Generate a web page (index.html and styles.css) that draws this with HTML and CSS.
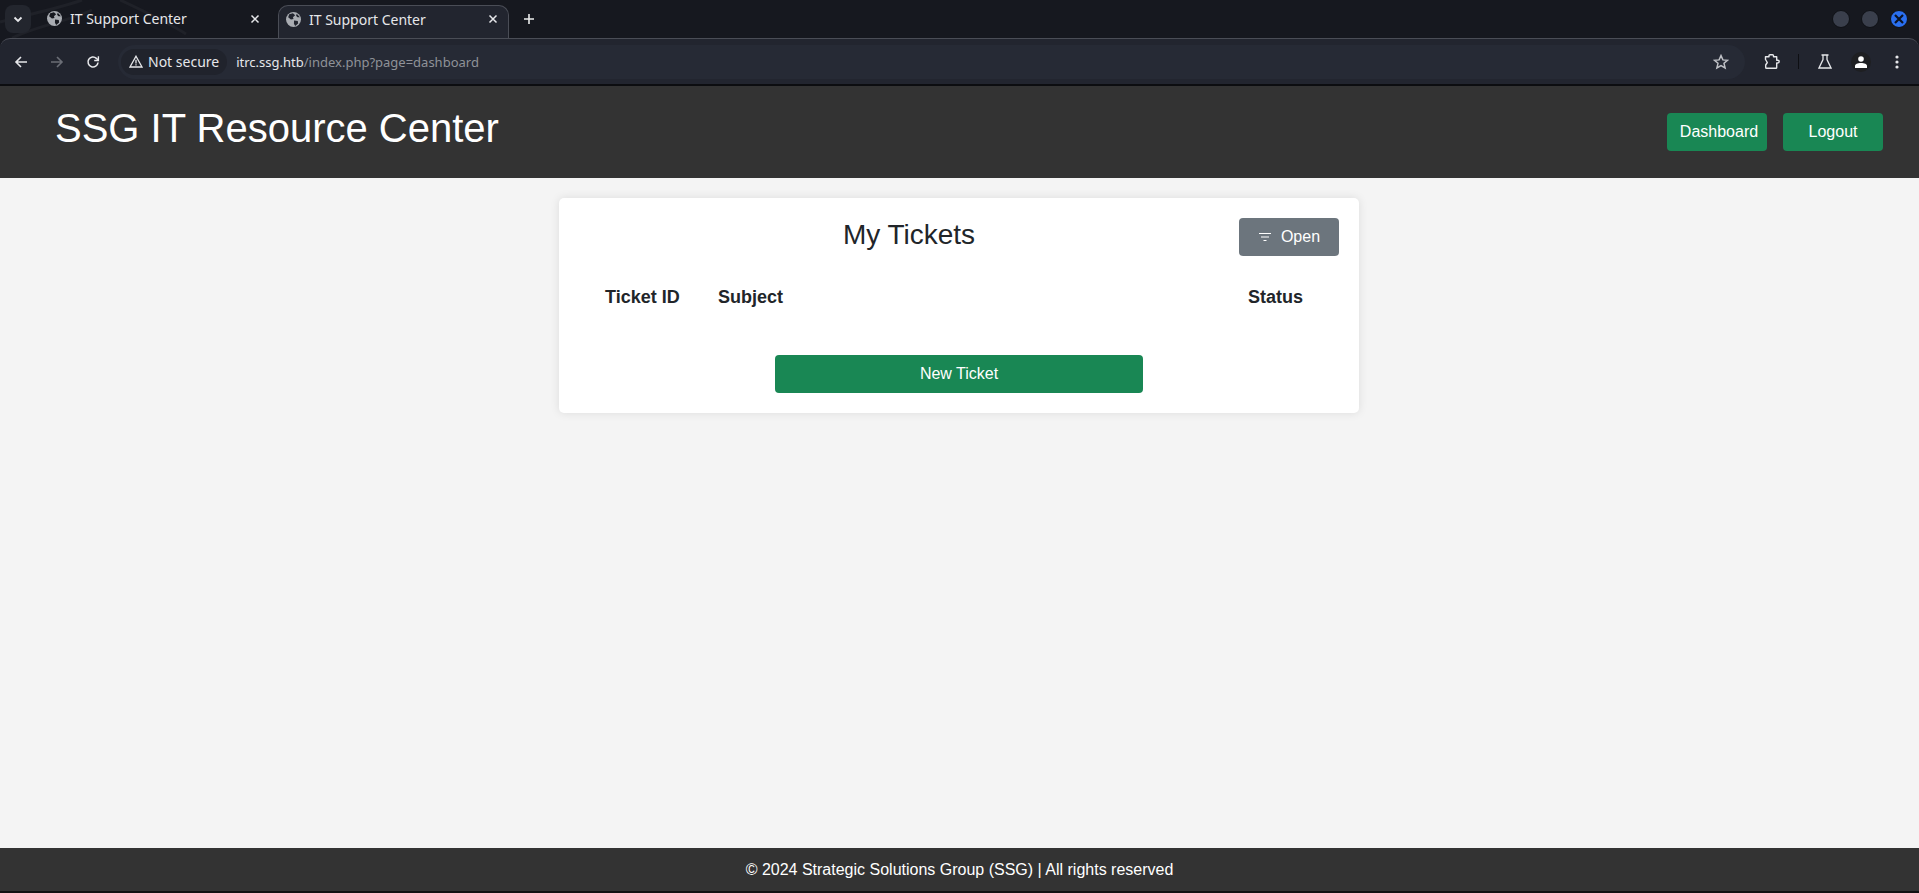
FILE: index.html
```html
<!DOCTYPE html>
<html lang="en">
<head>
  <meta charset="UTF-8">
  <title>IT Support Center</title>
  <link rel="stylesheet" href="styles.css">
</head>
<body>
  <div class="browser">
    <div class="tabstrip">
      <svg class="wallpaper" width="300" height="38" viewBox="0 0 300 38" fill="none" stroke="#1f2128" stroke-width="3">
        <path d="M0 22 C30 14 60 8 82 0"/>
        <path d="M12 38 C36 26 66 22 92 10"/>
        <path d="M120 0 C150 14 170 24 186 34"/>
      </svg>
      <button class="tab-search">
        <svg width="12" height="12" viewBox="0 0 12 12" fill="none" stroke="#e6e7ea" stroke-width="1.8"><path d="M2.5 4.5 6 8l3.5-3.5"/></svg>
      </button>
      <div class="tab">
        <svg class="globe" width="15" height="15" viewBox="0 0 14 14"><circle cx="7" cy="7" r="7" fill="#a9acb2"/><path d="M3 2 6.500 1.200 8.500 3 6.500 5 7 6.500 4.600 7 2 5zM7.500 8l3.500.5.3 2.300L8.600 13 7.400 11zM10 1.600l3 3.200-2.300.2-1.300-1.400z" fill="#171920"/></svg>
        <span class="tab-title">IT Support Center</span>
        <svg class="tab-close" width="10" height="10" viewBox="0 0 10 10" stroke="#e6e7ea" stroke-width="1.5"><path d="M1.500 1.500l7 7M8.500 1.500l-7 7"/></svg>
      </div>
      <div class="tab tab-active">
        <svg class="globe" width="15" height="15" viewBox="0 0 14 14"><circle cx="7" cy="7" r="7" fill="#a9acb2"/><path d="M3 2 6.500 1.200 8.500 3 6.500 5 7 6.500 4.600 7 2 5zM7.500 8l3.500.5.3 2.300L8.600 13 7.400 11zM10 1.600l3 3.200-2.300.2-1.300-1.400z" fill="#22252f"/></svg>
        <span class="tab-title">IT Support Center</span>
        <svg class="tab-close" width="10" height="10" viewBox="0 0 10 10" stroke="#e6e7ea" stroke-width="1.5"><path d="M1.500 1.500l7 7M8.500 1.500l-7 7"/></svg>
      </div>
      <svg class="new-tab" width="12" height="12" viewBox="0 0 12 12" stroke="#eceded" stroke-width="1.6"><path d="M6 1v10M1 6h10"/></svg>
      <div class="window-btns">
        <span class="win-btn"></span>
        <span class="win-btn"></span>
        <span class="win-btn win-close">
          <svg width="10" height="10" viewBox="0 0 10 10" stroke="#0c1424" stroke-width="2.2"><path d="M1 1l8 8M9 1l-8 8"/></svg>
        </span>
      </div>
    </div>
    <div class="toolbar">
      <div class="nav-btns">
        <svg width="14" height="14" viewBox="0 0 14 14" fill="none" stroke="#e6e7ea" stroke-width="1.6"><path d="M13 7H2M7 2 2 7l5 5"/></svg>
        <svg width="14" height="14" viewBox="0 0 14 14" fill="none" stroke="#6b6e76" stroke-width="1.6"><path d="M1 7h11M7 2l5 5-5 5"/></svg>
        <svg width="14" height="14" viewBox="0 0 14 14" fill="none" stroke="#e6e7ea" stroke-width="1.6"><path d="M12 7.500A5 5 0 1 1 10.400 3.300L12 5"/><path d="M12.400 1.200v4.300H8.200" stroke-width="1.4"/></svg>
      </div>
      <div class="omnibox">
        <div class="chip">
          <svg width="14" height="13" viewBox="0 0 14 13" fill="none" stroke="#e6e7ea" stroke-width="1.3"><path d="M7 1.200 13 12H1z"/><path d="M7 4.800v3.600M7 9.200v1.200"/></svg>
          <span>Not secure</span>
        </div>
        <span class="url"><span class="host">itrc.ssg.htb</span>/index.php?page=dashboard</span>
        <svg class="star" width="16" height="16" viewBox="0 0 16 16" fill="none" stroke="#bfc1c6" stroke-width="1.5"><path d="M8 1.600l1.900 4.300 4.600.4-3.500 3 1.100 4.600L8 11.500l-4.100 2.400L5 9.300l-3.500-3 4.600-.4z"/></svg>
      </div>
      <div class="toolbar-icons">
        <svg width="16" height="16" viewBox="0 0 16 16" fill="none" stroke="#e6e7ea" stroke-width="1.4" stroke-linejoin="round"><path d="M1.500 2.800H5V1.800a1 1 0 0 1 1-1h2.500a1 1 0 0 1 1 1v1h3.200v3.400h1.100a1.300 1.300 0 0 1 0 2.800h-1.100v4.500a.8.800 0 0 1-.8.800H2.500a.8.800 0 0 1-.8-.8V11l1.600-2.500-1.800-3z"/></svg>
        <span class="divider"></span>
        <svg class="flask" width="14" height="15" viewBox="0 0 14 15" fill="none" stroke="#e6e7ea" stroke-width="1.3"><path d="M3.500 1h7M5 1v4.500L1 14h12L9 5.500V1"/></svg>
        <span class="avatar">
          <svg width="12" height="12" viewBox="0 0 12 12" fill="#fff"><circle cx="6" cy="3" r="2.800"/><path d="M0 12V10c0-2 2.500-3 6-3s6 1 6 3v2z"/></svg>
        </span>
        <svg class="dots" width="4" height="14" viewBox="0 0 4 14" fill="#e6e7ea"><circle cx="2" cy="2" r="1.600"/><circle cx="2" cy="7" r="1.600"/><circle cx="2" cy="12" r="1.600"/></svg>
      </div>
    </div>
  </div>

  <header class="site-header">
    <h1>SSG IT Resource Center</h1>
    <nav class="site-nav">
      <a class="btn btn-green btn-dash" href="#">Dashboard</a>
      <a class="btn btn-green" href="#">Logout</a>
    </nav>
  </header>

  <main class="content">
    <section class="card">
      <div class="card-head">
        <h2>My Tickets</h2>
        <button class="btn btn-grey">
          <svg width="12" height="8" viewBox="0 0 12 8" stroke="#fff" stroke-width="1"><path d="M0 .5h12M2 4h8M4.500 7.500h3"/></svg>
          Open
        </button>
      </div>
      <table class="tickets">
        <tr>
          <th class="col-id">Ticket ID</th>
          <th class="col-subject">Subject</th>
          <th class="col-status">Status</th>
        </tr>
      </table>
      <a class="btn btn-green btn-new" href="#">New Ticket</a>
    </section>
  </main>

  <footer class="site-footer">© 2024 Strategic Solutions Group (SSG) | All rights reserved</footer>
</body>
</html>
```

FILE: styles.css
```css
html, body {
  margin: 0;
  height: 893px;
  overflow: hidden;
}

body {
  display: flex;
  flex-direction: column;
  background: #f4f4f4;
  color: #212529;
  font-family: "Liberation Sans", Arial, sans-serif;
  font-size: 16px;
}

/* browser chrome */
.browser {
  flex: none;
  background: #16181f;
  font-family: "Noto Sans", sans-serif;
  color: #e6e7ea;
}

.tabstrip {
  position: relative;
  display: flex;
  align-items: flex-end;
  height: 38px;
  background: #16181f;
}

.wallpaper {
  position: absolute;
  left: 0;
  top: 0;
}

.tab-search {
  position: relative;
  display: flex;
  align-items: center;
  justify-content: center;
  width: 26px;
  height: 28px;
  margin: 0 0 5px 5px;
  padding: 0;
  border: 0;
  border-radius: 8px;
  background: #23262e;
}

.tab {
  position: relative;
  display: flex;
  align-items: center;
  box-sizing: border-box;
  width: 247px;
  height: 33px;
  padding: 0 0 6px 16px;
  font-size: 14px;
}

.tab-active {
  width: 231px;
  padding-left: 7px;
  border: 1px solid #4a4d56;
  border-bottom: 0;
  border-radius: 10px 10px 0 0;
  background: #22252f;
  z-index: 1;
}

.tab .globe {
  flex: none;
  margin-right: 8px;
}

.tab-title {
  flex: 1;
  white-space: nowrap;
}

.tab-close {
  flex: none;
  margin-right: 18px;
}

.tab-active .tab-close {
  margin-right: 10px;
}

.new-tab {
  position: relative;
  margin: 0 0 13px 14px;
}

.window-btns {
  display: flex;
  align-items: center;
  gap: 11px;
  margin: 0 11px 10px auto;
}

.win-btn {
  display: flex;
  align-items: center;
  justify-content: center;
  box-sizing: border-box;
  width: 18px;
  height: 18px;
  border: 1px solid #0f1116;
  border-radius: 50%;
  background: #3a3f4c;
}

.win-close {
  background: #2a6ff0;
}

.toolbar {
  display: flex;
  align-items: center;
  box-sizing: border-box;
  height: 48px;
  border-top: 1px solid #4a4d56;
  border-bottom: 2px solid #0c0d10;
  border-radius: 10px 10px 0 0;
  background: #22252f;
}

.nav-btns {
  display: flex;
  align-items: center;
  gap: 22px;
  margin-left: 14px;
  width: 104px;
  flex: none;
}

.omnibox {
  display: flex;
  align-items: center;
  flex: 1;
  height: 34px;
  border-radius: 17px;
  background: #262a35;
  font-size: 13px;
}

.chip {
  display: flex;
  align-items: center;
  gap: 5px;
  height: 26px;
  margin-left: 3px;
  padding: 0 8px;
  border-radius: 13px;
  background: #20232c;
  font-size: 14px;
}

.url {
  margin-left: 9px;
  color: #8f9298;
}

.host {
  color: #e6e7ea;
}

.star {
  margin-left: auto;
  margin-right: 16px;
}

.toolbar-icons {
  display: flex;
  align-items: center;
  flex: none;
  width: 174px;
  padding-left: 19px;
  box-sizing: border-box;
}

.divider {
  width: 1px;
  height: 15px;
  margin: 0 19px 0 18px;
  background: #0e0f13;
}

.avatar {
  display: flex;
  align-items: center;
  justify-content: center;
  width: 20px;
  height: 20px;
  margin-left: 19px;
  border-radius: 50%;
  background: #1e1f22;
}

.dots {
  margin-left: 24px;
}

/* site */
.site-header {
  flex: none;
  display: flex;
  align-items: center;
  justify-content: space-between;
  box-sizing: border-box;
  height: 92px;
  padding: 0 36px 0 55px;
  background: #333;
  color: #fff;
}

.site-header h1 {
  margin: 0 0 8px;
  font-size: 40px;
  font-weight: 400;
  line-height: 48px;
}

.site-nav {
  display: flex;
  gap: 16px;
}

.btn {
  display: flex;
  align-items: center;
  justify-content: center;
  box-sizing: border-box;
  width: 100px;
  height: 38px;
  border: 0;
  border-radius: 4px;
  color: #fff;
  font-family: inherit;
  font-size: 16px;
  text-decoration: none;
}

.btn-green {
  background: #198754;
}

.btn-dash {
  padding-left: 4px;
}

.btn-grey {
  gap: 10px;
  padding-left: 7px;
  background: #6c757d;
}

.content {
  flex: 1;
  display: flex;
  justify-content: center;
  align-items: flex-start;
  padding: 20px 1px 0 0;
}

.card {
  box-sizing: border-box;
  width: 800px;
  height: 215px;
  padding: 20px;
  border-radius: 5px;
  background: #fff;
  box-shadow: 0 0 10px rgba(0, 0, 0, 0.1);
}

.card-head {
  display: flex;
  align-items: center;
}

.card-head h2 {
  flex: 1;
  margin: 0 0 4px;
  font-size: 28px;
  font-weight: 400;
  line-height: 34px;
  text-align: center;
}

.tickets {
  width: 732px;
  margin: 19px 14px 0;
  border-collapse: collapse;
  table-layout: fixed;
}

.tickets th {
  padding: 12px;
  font-size: 18px;
  line-height: 20px;
  text-align: left;
}

.col-id {
  width: 89px;
}

.col-status {
  width: 65px;
}

.btn-new {
  width: 368px;
  margin: 36px 0 0 196px;
}

.site-footer {
  flex: none;
  box-sizing: border-box;
  height: 45px;
  padding-top: 12px;
  border-bottom: 2px solid #111;
  background: #333;
  color: #fff;
  line-height: 20px;
  text-align: center;
}
```
